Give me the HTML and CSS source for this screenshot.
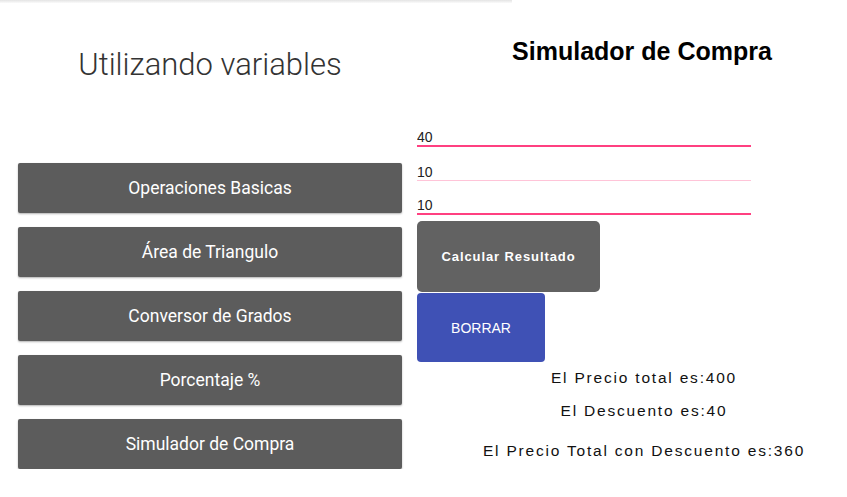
FILE: index.html
```html
<!DOCTYPE html>
<html lang="es">
  <head>
    <meta charset="UTF-8" />
    <title>Utilizando variables</title>
    <link rel="stylesheet" href="styles.css">
  </head>
  <body>
    <div class="top-shadow"></div>

    <div class="screen">
      <!-- Menu -->
      <div class="menu">
        <h1 class="menu-title">Utilizando variables</h1>
        <div class="menu-list">
          <button class="menu-button">Operaciones Basicas</button>
          <button class="menu-button">Área de Triangulo</button>
          <button class="menu-button">Conversor de Grados</button>
          <button class="menu-button">Porcentaje %</button>
          <button class="menu-button">Simulador de Compra</button>
        </div>
      </div>

      <!-- Simulador -->
      <div class="simulator">
        <h2 class="sim-title">Simulador de Compra</h2>

        <div class="fields">
          <input class="field" type="text" value="40">
          <input class="field field-idle" type="text" value="10">
          <input class="field" type="text" value="10">
        </div>

        <button class="calc-button">Calcular Resultado</button>
        <button class="clear-button">BORRAR</button>

        <div class="results">
          <p class="result result-first">El Precio total es:400</p>
          <p class="result result-second">El Descuento es:40</p>
          <p class="result result-third">El Precio Total con Descuento es:360</p>
        </div>
      </div>
    </div>
  </body>
</html>
```

FILE: styles.css
```css
body {
  margin: 0;
  font-family: Roboto, "Liberation Sans", Arial, sans-serif;
  background-color: white;
  color: #222;
}

.top-shadow {
  width: 512px;
  height: 3px;
  background: linear-gradient(to bottom, #e4e4e4, #fafafa);
}

.screen {
  display: flex;
}

/* left side */
.menu {
  width: 384px;
  margin-left: 18px;
  display: flex;
  flex-direction: column;
}

.menu-title {
  margin: 44px 0 0 0;
  font-size: 31px;
  line-height: 36px;
  font-weight: 300;
  color: #333;
  text-align: center;
}

.menu-list {
  margin-top: 80px;
  display: flex;
  flex-direction: column;
  gap: 14px;
}

.menu-button {
  height: 50px;
  border: none;
  border-radius: 2px;
  background-color: #5c5c5c;
  color: white;
  font-family: Roboto, sans-serif;
  font-size: 17.5px;
  box-shadow: 0 1px 2px rgba(0, 0, 0, 0.3);
  cursor: pointer;
}

/* right side */
.simulator {
  width: 430px;
  margin-left: 15px;
  display: flex;
  flex-direction: column;
  align-items: flex-start;
  font-family: "Liberation Sans", Arial, sans-serif;
}

.sim-title {
  align-self: stretch;
  margin: 34px 0 0 0;
  padding-left: 20px;
  font-size: 25px;
  line-height: 28px;
  font-weight: bold;
  color: black;
  text-align: center;
}

.fields {
  margin-top: 48px;
  display: flex;
  flex-direction: column;
}

.field {
  width: 334px;
  height: 34px;
  box-sizing: border-box;
  margin: 0;
  padding: 16px 0 0 0;
  border: none;
  border-bottom: 2px solid #ff4081;
  outline: none;
  font-family: "Liberation Sans", Arial, sans-serif;
  font-size: 14px;
  color: #222;
  background: transparent;
}

.field-idle {
  border-bottom: 1px solid #ffc4d8;
}

.calc-button {
  margin-top: 6px;
  width: 183px;
  height: 71px;
  border: none;
  border-radius: 5px;
  background-color: #626262;
  color: white;
  font-family: "Liberation Sans", Arial, sans-serif;
  font-size: 13px;
  font-weight: bold;
  letter-spacing: 0.9px;
  cursor: pointer;
}

.clear-button {
  margin-top: 1px;
  width: 128px;
  height: 69px;
  border: none;
  border-radius: 4px;
  background-color: #3f51b5;
  color: white;
  font-family: "Liberation Sans", Arial, sans-serif;
  font-size: 14px;
  cursor: pointer;
}

.results {
  align-self: stretch;
  padding-left: 24px;
  text-align: center;
}

.result {
  margin: 0;
  font-size: 15.5px;
  line-height: 18px;
  letter-spacing: 1.8px;
  color: #111;
}

.result-first {
  margin-top: 7px;
}

.result-second {
  margin-top: 15px;
}

.result-third {
  margin-top: 22px;
}
```
